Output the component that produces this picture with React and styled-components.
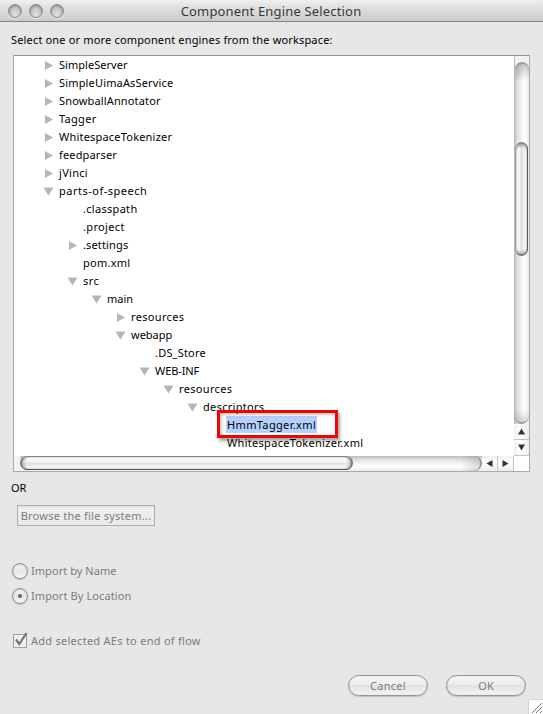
import React from "react";
import styled, { createGlobalStyle, css } from "styled-components";

const Global = createGlobalStyle`
  * { box-sizing: border-box; }
  html, body { margin: 0; padding: 0; background: #e7e7e7; overflow: hidden; }
  body { font-family: "Noto Sans", "Open Sans", sans-serif; font-size: 11px; color: #000; }
`;

const Window = styled.main`
  position: relative;
  display: flex;
  flex-direction: column;
  width: 543px;
  height: 714px;
  background: #e7e7e7;
  overflow: hidden;
`;

const TitleBar = styled.header`
  display: grid;
  grid-template-columns: 65px 1fr 65px;
  align-items: center;
  height: 22px;
  padding: 0 9px 0 8px;
  background: linear-gradient(#f0f0f0, #e2e2e2 30%, #cbcbcb);
  border-bottom: 1px solid #858585;
  border-radius: 4px 4px 0 0;
`;

const Lights = styled.div`
  display: flex;
  gap: 7px;
`;

const Light = styled.i`
  width: 14px;
  height: 14px;
  border: 1px solid #8c8c8c;
  border-radius: 50%;
  background: radial-gradient(ellipse at 50% 90%, #e6e6e6, #c5c5c5 55%, #b2b2b2);
  box-shadow: inset 0 1px 2px #858585, 0 1px 0 #e9e9e9;
`;

const Title = styled.h1`
  margin: 0;
  font-size: 13px;
  font-weight: 400;
  line-height: 20px;
  color: #383838;
  text-align: center;
  white-space: nowrap;
`;

const Text = styled.span`
  display: inline-block;
  flex: none;
  white-space: pre;
  letter-spacing: ${(p) => p.$track || 0}px;
`;

const Prompt = styled.p`
  height: 33px;
  margin: 0;
  padding: 9px 0 0 11px;
  line-height: 18px;
`;

const Panel = styled.section`
  display: grid;
  grid-template: 400px 15px / 500px 15px;
  width: 517px;
  height: 417px;
  margin-left: 13px;
  background: #fff;
  border: 1px solid #aaa;
  border-top-color: #949494;
`;

const Tree = styled.ul`
  margin: 0;
  padding: 0;
  list-style: none;
`;

const Row = styled.li`
  display: flex;
  align-items: center;
  height: 18px;
  padding-left: ${(p) => 29 + p.$depth * 24}px;
  line-height: 18px;
`;

const Toggle = styled.svg`
  flex: none;
  width: 11px;
  height: 11px;
  margin-right: 5px;
  fill: #b5b5b5;
`;

const Selected = styled.span`
  position: relative;
  display: flex;
  align-self: flex-start;
  height: 17px;
  margin-left: -1px;
  padding: 0 1px;
  line-height: 17px;
  background: #b4d0fd;
`;

const Highlight = styled.span`
  position: absolute;
  left: -9px;
  top: -6px;
  width: 121px;
  height: 28px;
  border: 3px solid #f80000;
  box-shadow: 2px 3px 3px rgba(0, 0, 0, 0.35), inset 2px 2px 3px rgba(0, 0, 0, 0.22);
`;

const vertical = css`
  flex-direction: column;
  background: linear-gradient(90deg, #bababa, #dedede 22%, #f8f8f8 55%, #fff 75%, #e9e9e9);
`;
const horizontal = css`
  flex-direction: row;
  background: linear-gradient(#bababa, #dedede 22%, #f8f8f8 55%, #fff 75%, #e9e9e9);
`;

const ScrollBar = styled.div`
  display: flex;
  ${(p) => (p.$vertical ? vertical : horizontal)}
`;

const TrackStart = styled.i`
  flex: none;
  background: #f3f3f3;
  ${(p) =>
    p.$vertical
      ? css`
          height: 86px;
          padding-top: 6px;
          background: linear-gradient(#f1f1f1 10px, transparent 10px);
          border-left: 1px solid #bbb;
          &::before {
            content: "";
            display: block;
            height: 16px;
            border-top: 2px solid #999;
            border-radius: 8px 8px 0 0;
            background:
              linear-gradient(rgba(110, 110, 110, 0.4), transparent),
              linear-gradient(90deg, #c4c4c4, #f8f8f8 55%, #fff 75%, #e9e9e9);
          }
        `
      : css`
          width: 6px;
        `}
`;

const Thumb = styled.i`
  flex: none;
  border: 1px solid #606060;
  border-radius: 8px;
  ${(p) =>
    p.$vertical
      ? css`
          height: 114px;
          width: 13px;
          margin-left: 1px;
          border-width: 2px 1px 2px 1px;
          border-color: #888 #5a5a5a #777 #999;
          background: linear-gradient(90deg, #fff 0, #f3f3f3 38%, #d7d7d7 44%, #ededed 65%, #fff);
          box-shadow: inset 0 2px 2px #aaa, inset 0 -2px 2px #bbb;
        `
      : css`
          width: 333px;
          height: 14px;
          border-width: 1px 2px;
          border-color: #858585 #777 #555;
          background: linear-gradient(#fff, #f1f1f1 45%, #dcdcdc 50%, #ececec 70%, #fff);
          box-shadow: inset 2px 0 2px #bbb, inset -2px 0 2px #bbb;
        `}
`;

const TrackEnd = styled.i`
  flex: 1;
  ${(p) =>
    p.$vertical
      ? css`
          border-bottom: 2px solid #999;
          border-radius: 0 0 8px 8px;
          background: linear-gradient(transparent calc(100% - 13px), rgba(100, 100, 100, 0.24));
        `
      : css`
          border-right: 2px solid #999;
          border-radius: 0 8px 8px 0;
          background: linear-gradient(90deg, transparent calc(100% - 20px), rgba(100, 100, 100, 0.24));
        `}
`;

const Arrows = styled.div`
  display: flex;
  flex: none;
  flex-direction: ${(p) => (p.$vertical ? "column" : "row")};
  background: linear-gradient(${(p) => (p.$vertical ? "90deg" : "180deg")}, #f0f0f0, #fff 40%, #ededed);
`;

const Arrow = styled.span`
  display: grid;
  place-items: center;
  width: ${(p) => (p.$vertical ? 15 : 16)}px;
  height: ${(p) => (p.$vertical ? 16 : 15)}px;
  ${(p) => (p.$vertical ? "border-bottom: 1px solid #c4c4c4;" : "border-right: 1px solid #c4c4c4;")}
  svg {
    width: 7px;
    height: 7px;
    fill: #333;
    transform: rotate(${(p) => p.$turn}deg);
  }
`;

const Or = styled.p`
  margin: 0;
  padding: 7px 0 0 11px;
  line-height: 18px;
`;

const BrowseButton = styled.button`
  display: flex;
  align-items: center;
  justify-content: center;
  width: 138px;
  height: 21px;
  margin: 8px 0 0 17px;
  padding: 0;
  border: 1px solid #adadad;
  background: linear-gradient(#e4e4e4, #f0f0f0 15%, #e9e9e9);
  color: #7c7c7c;
  font: inherit;
`;

const Options = styled.div`
  display: flex;
  flex-direction: column;
  padding: 36px 0 0 12px;
`;

const Option = styled.label`
  display: flex;
  align-items: center;
  gap: 3px;
  height: 18px;
  margin-bottom: ${(p) => p.$after || 0}px;
  color: #7c7c7c;
  ${Text} { padding-bottom: 2px; }
`;

const Radio = styled.i`
  display: grid;
  place-items: center;
  width: 16px;
  height: 16px;
  border: 1px solid #909090;
  border-radius: 50%;
  background: linear-gradient(#f4f4f4, #e5e5e5 48%, #f6f6f6);
  box-shadow: inset 0 1px 1px #ccc, 0 1px 1px #bbb;
  &::after {
    content: "";
    width: 4px;
    height: 4px;
    border-radius: 50%;
    background: ${(p) => (p.$on ? "#666" : "transparent")};
  }
`;

const Check = styled.svg`
  width: 16px;
  height: 18px;
  margin-top: -2px;
`;

const Footer = styled.footer`
  display: flex;
  gap: 17px;
  margin: 25px 0 0 348px;
`;

const PillButton = styled.button`
  display: flex;
  align-items: center;
  justify-content: center;
  width: 80px;
  height: 21px;
  padding: 0 0 1px;
  margin-right: 1px;
  border: 1px solid #969696;
  border-radius: 11px;
  background: linear-gradient(#f5f5f5, #ededed 45%, #e2e2e2 50%, #f3f3f3);
  box-shadow: inset 0 0 1px #aaa, 0 1px 1px #c0c0c0;
  color: #7c7c7c;
  font: inherit;
`;

const ResizeGrip = styled.svg`
  position: absolute;
  right: 0;
  bottom: 0;
  width: 15px;
  height: 15px;
`;

const items = [
  [0, "right", "SimpleServer", 0.04],
  [0, "right", "SimpleUimaAsService", 0.16],
  [0, "right", "SnowballAnnotator", 0.15],
  [0, "right", "Tagger", 0.3],
  [0, "right", "WhitespaceTokenizer", 0.2],
  [0, "right", "feedparser", 0.15],
  [0, "right", "jVinci", 0.3],
  [0, "down", "parts-of-speech", 0.5],
  [1, null, ".classpath", 0.3],
  [1, null, ".project", 0.35],
  [1, "right", ".settings", 0.15],
  [1, null, "pom.xml", 0.25],
  [1, "down", "src", 0.4],
  [2, "down", "main", 0],
  [3, "right", "resources", 0.33],
  [3, "down", "webapp", 0],
  [4, null, ".DS_Store", 0.2],
  [4, "down", "WEB-INF", -0.1],
  [5, "down", "resources", 0.33],
  [6, "down", "descriptors", 0.3],
  [7, null, "HmmTagger.xml", 0.35, true],
  [7, null, "WhitespaceTokenizer.xml", 0.3],
];

function TreeItem({ item: [depth, state, name, track, selected] }) {
  const text = <Text $track={track}>{name}</Text>;
  return (
    <Row $depth={depth}>
      <Toggle viewBox="0 0 11 11">
        {state === "right" && <path d="M2 1v9l8-4.5z" />}
        {state === "down" && <path d="M.5 1.5h10l-5 8z" />}
      </Toggle>
      {selected ? <Selected>{text}<Highlight /></Selected> : text}
    </Row>
  );
}

function ScrollArrow({ turn, vertical: v }) {
  return (
    <Arrow $turn={turn} $vertical={v}>
      <svg viewBox="0 0 7 7"><path d="M3.5 .5 7 6.5H0z" /></svg>
    </Arrow>
  );
}

function Scroller({ vertical: v }) {
  return (
    <ScrollBar $vertical={v}>
      <TrackStart $vertical={v} />
      <Thumb $vertical={v} />
      <TrackEnd $vertical={v} />
      <Arrows $vertical={v}>
        <ScrollArrow vertical={v} turn={v ? 0 : -90} />
        <ScrollArrow vertical={v} turn={v ? 180 : 90} />
      </Arrows>
    </ScrollBar>
  );
}

export default function App() {
  return (
    <Window>
      <Global />
      <TitleBar>
        <Lights><Light /><Light /><Light /></Lights>
        <Title><Text $track={0.17}>Component Engine Selection</Text></Title>
      </TitleBar>
      <Prompt><Text $track={0.165}>Select one or more component engines from the workspace:</Text></Prompt>
      <Panel>
        <Tree>{items.map((item, i) => <TreeItem key={i} item={item} />)}</Tree>
        <Scroller vertical />
        <Scroller />
      </Panel>
      <Or><Text $track={-0.2}>OR</Text></Or>
      <BrowseButton><Text $track={0.24}>Browse the file system...</Text></BrowseButton>
      <Options>
        <Option $after={7}><Radio /><Text $track={0.05}>Import by Name</Text></Option>
        <Option $after={27}><Radio $on /><Text $track={0.1}>Import By Location</Text></Option>
        <Option>
          <Check viewBox="0 0 16 18">
            <rect x="1.5" y="3.5" width="13" height="13" fill="#f0f0f0" stroke="#a0a0a0" />
            <path d="M4 8.5 7.3 13 14.5 2" fill="none" stroke="#757575" strokeWidth="2.2" />
          </Check>
          <Text $track={0.27}>Add selected AEs to end of flow</Text>
        </Option>
      </Options>
      <Footer>
        <PillButton><Text $track={0.3}>Cancel</Text></PillButton>
        <PillButton><Text>OK</Text></PillButton>
      </Footer>
      <ResizeGrip viewBox="0 0 15 15">
        <path d="M0 0h15v15H0z" fill="#fff" />
        <path d="M.5 15V.5H15" fill="none" stroke="#d4d4d4" />
        <path d="M4 14 14 4M8 14l6-6M12 14l2-2" stroke="#777" fill="none" />
      </ResizeGrip>
    </Window>
  );
}
